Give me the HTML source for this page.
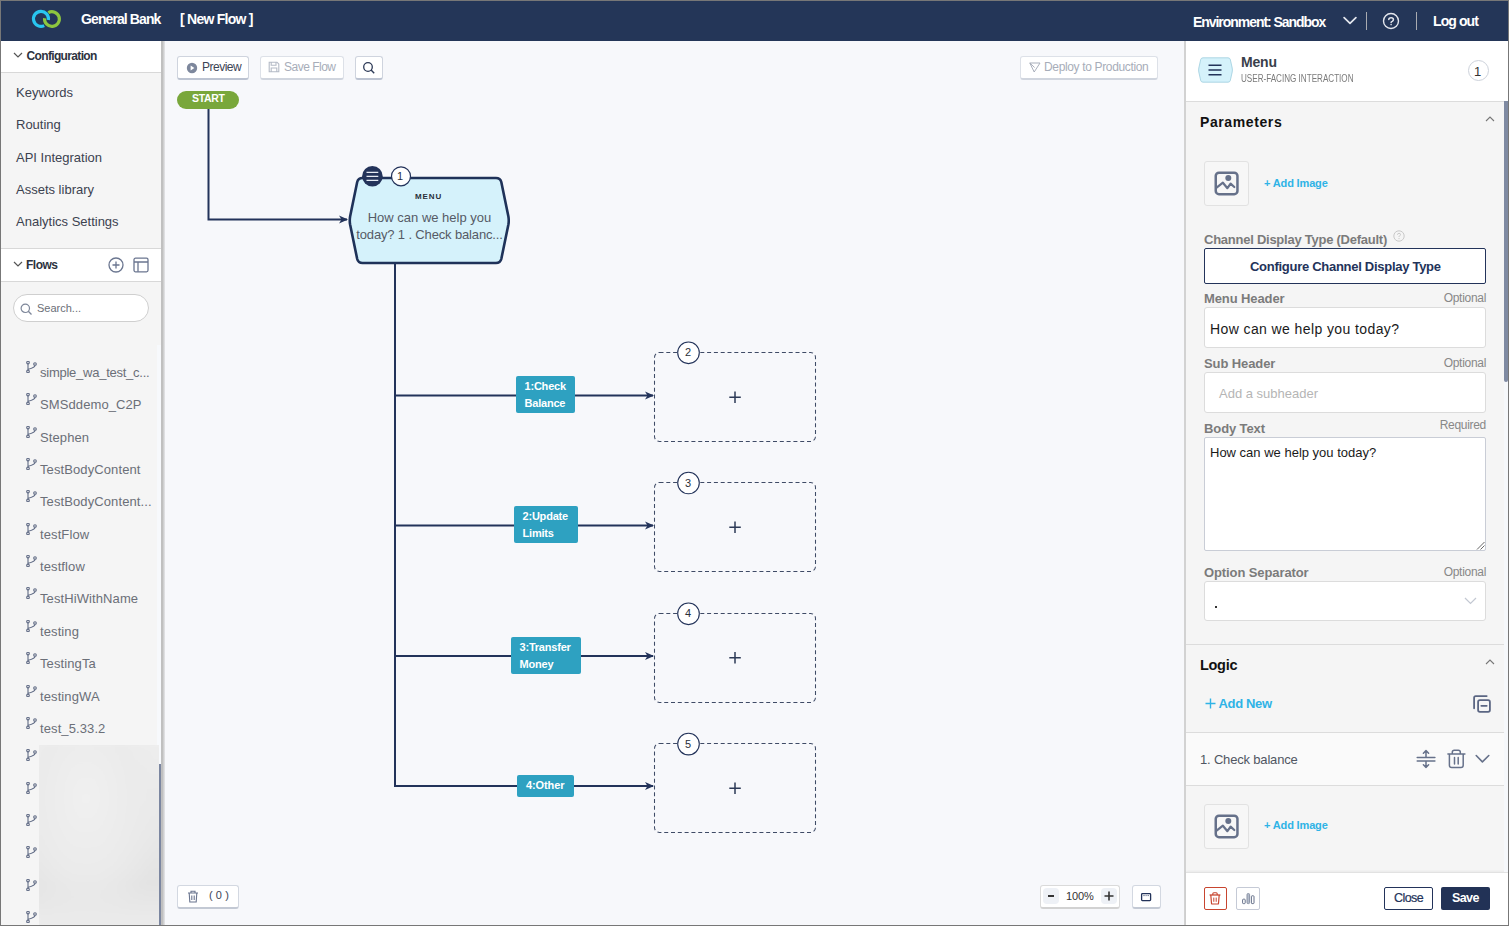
<!DOCTYPE html>
<html><head><meta charset="utf-8">
<style>
*{box-sizing:border-box;margin:0;padding:0}
html,body{width:1509px;height:926px;overflow:hidden;background:#f7f9fc;font-family:"Liberation Sans",sans-serif}
.a{position:absolute}
.t{position:absolute;white-space:nowrap;line-height:1}
#frame{position:absolute;left:0;top:0;width:1509px;height:926px;border:1px solid #777;pointer-events:none;z-index:100}
#hdr{left:0;top:0;width:1509px;height:41px;background:#243658;color:#fff}
#side{left:0;top:41px;width:165px;height:885px;background:#f5f5f5;overflow:hidden}
#canvas{left:165px;top:41px;width:1019px;height:885px;background:#f7f8fb}
#panel{left:1184px;top:41px;width:325px;height:885px;background:#f5f5f5;overflow:hidden}
.btn{position:absolute;background:#fff;border:1px solid #cfd4de;border-bottom:2px solid #bcc3d1;border-radius:3px}
.item{position:absolute;left:16px;font-size:13px;color:#3c4250;white-space:nowrap;line-height:1}
.flow{position:absolute;left:0;width:160px;height:20px}
.flow svg{position:absolute;left:26px;top:0}
.flow span{position:absolute;left:40px;top:5px;font-size:13px;color:#6b6f78;white-space:nowrap;line-height:1;letter-spacing:0.1px}
.lbl{position:absolute;left:20px;font-size:13px;font-weight:bold;color:#7b7b7b;line-height:1;letter-spacing:-0.1px}
.opt{position:absolute;right:23px;font-size:12px;color:#888;line-height:1;letter-spacing:-0.3px}
.inp{position:absolute;left:20px;width:282px;background:#fff;border:1px solid #dcdcdc;border-radius:3px}
</style></head><body>
<div id="frame"></div>

<!-- HEADER -->
<div id="hdr" class="a">
  <svg class="a" style="left:28px;top:6px" width="38" height="26" viewBox="28 6 38 26">
    <path d="M48.4 20.0 A7.5 7.5 0 1 0 44.2 25.6" fill="none" stroke="#29c6f0" stroke-width="3.2"/>
    <path d="M44.6 18.2 A7.4 7.4 0 1 0 48.3 12.6" fill="none" stroke="#8dc63f" stroke-width="3.2"/>
  </svg>
  <div class="t" style="left:81px;top:12.2px;font-size:14px;font-weight:bold;letter-spacing:-0.9px">General Bank</div>
  <div class="t" style="left:180px;top:12.2px;font-size:14px;font-weight:bold;letter-spacing:-0.75px">[ New Flow ]</div>
  <div class="t" style="left:1193px;top:14.5px;font-size:14px;font-weight:bold;letter-spacing:-1.05px">Environment: Sandbox</div>
  <svg class="a" style="left:1343px;top:15px" width="14" height="11" viewBox="0 0 14 11"><path d="M1.1 2.6 L7 8.4 L12.9 2.6" fill="none" stroke="#e4e7ee" stroke-width="1.7" stroke-linecap="round" stroke-linejoin="round"/></svg>
  <div class="a" style="left:1366px;top:12px;width:1px;height:18px;background:#a9abb0"></div>
  <svg class="a" style="left:1382px;top:12px" width="18" height="18" viewBox="0 0 18 18"><circle cx="9" cy="9" r="7.5" fill="none" stroke="#e4e7ee" stroke-width="1.4"/><path d="M6.8 7.6 Q6.8 5.7 9.1 5.7 Q11.4 5.7 11.4 7.6 Q11.4 8.8 10.2 9.4 Q9.1 9.9 9.1 10.5" fill="none" stroke="#e4e7ee" stroke-width="1.5" stroke-linecap="round"/><circle cx="9.1" cy="12.6" r="0.8" fill="#e4e7ee"/></svg>
  <div class="a" style="left:1416px;top:12px;width:1px;height:18px;background:#a9abb0"></div>
  <div class="t" style="left:1433px;top:14.3px;font-size:14px;font-weight:bold;letter-spacing:-0.9px">Log out</div>
</div>

<!-- LEFT SIDEBAR -->
<div id="side" class="a">
  <div class="a" style="left:0;top:0;width:161px;height:32px;background:#fff;border-bottom:1px solid #d8d8d8"></div>
  <svg class="a" style="left:13px;top:11px" width="10" height="7" viewBox="0 0 10 7"><path d="M1 1 L5 5 L9 1" fill="none" stroke="#555" stroke-width="1.2"/></svg>
  <div class="t" style="left:26.5px;top:9.1px;font-size:12px;font-weight:bold;color:#2d3340;letter-spacing:-0.65px">Configuration</div>
  <div class="item" style="top:45.3px">Keywords</div>
  <div class="item" style="top:77.3px">Routing</div>
  <div class="item" style="top:110.3px">API Integration</div>
  <div class="item" style="top:142.3px">Assets library</div>
  <div class="item" style="top:174.3px">Analytics Settings</div>

  <div class="a" style="left:0;top:207px;width:161px;height:34px;background:#fff;border-top:1px solid #d8d8d8;border-bottom:1px solid #d8d8d8"></div>
  <svg class="a" style="left:13px;top:220px" width="10" height="7" viewBox="0 0 10 7"><path d="M1 1 L5 5 L9 1" fill="none" stroke="#555" stroke-width="1.2"/></svg>
  <div class="t" style="left:26px;top:218px;font-size:12px;font-weight:bold;color:#2d3340;letter-spacing:-0.5px">Flows</div>
  <svg class="a" style="left:107px;top:215px" width="18" height="18" viewBox="0 0 18 18"><circle cx="9" cy="9" r="7" fill="none" stroke="#6b7690" stroke-width="1.3"/><path d="M9 5.5 V12.5 M5.5 9 H12.5" stroke="#6b7690" stroke-width="1.3"/></svg>
  <svg class="a" style="left:133px;top:216px" width="16" height="16" viewBox="0 0 16 16"><rect x="1" y="1.2" width="14" height="13.6" rx="1.5" fill="none" stroke="#6b7690" stroke-width="1.3"/><path d="M1 5 H15 M5 5 V14.8" stroke="#6b7690" stroke-width="1.3"/></svg>

  <div class="a" style="left:13px;top:253px;width:136px;height:28px;background:#fff;border:1px solid #cfcfcf;border-radius:14px"></div>
  <svg class="a" style="left:20px;top:262px" width="13" height="13" viewBox="0 0 13 13"><circle cx="5.3" cy="5.3" r="4.2" fill="none" stroke="#7d8699" stroke-width="1.2"/><path d="M8.3 8.3 L11.5 11.5" stroke="#7d8699" stroke-width="1.3"/></svg>
  <div class="t" style="left:37px;top:262px;font-size:11px;color:#6b6f78">Search...</div>

  <div id="flows">
<div class="flow" style="top:320.00px"><svg width="11" height="12" viewBox="0 0 11 12"><circle cx="2" cy="1.6" r="1.3" fill="none" stroke="#5f6a84" stroke-width="1.1"/><circle cx="2" cy="10.4" r="1.3" fill="none" stroke="#5f6a84" stroke-width="1.1"/><circle cx="9" cy="3" r="1.3" fill="none" stroke="#5f6a84" stroke-width="1.1"/><path d="M2 2.9 V9.1 M9 4.3 Q9 6.8 2.3 8.2" fill="none" stroke="#5f6a84" stroke-width="1.1"/></svg><span style="letter-spacing:-0.25px">simple_wa_test_c...</span></div>
<div class="flow" style="top:352.35px"><svg width="11" height="12" viewBox="0 0 11 12"><circle cx="2" cy="1.6" r="1.3" fill="none" stroke="#5f6a84" stroke-width="1.1"/><circle cx="2" cy="10.4" r="1.3" fill="none" stroke="#5f6a84" stroke-width="1.1"/><circle cx="9" cy="3" r="1.3" fill="none" stroke="#5f6a84" stroke-width="1.1"/><path d="M2 2.9 V9.1 M9 4.3 Q9 6.8 2.3 8.2" fill="none" stroke="#5f6a84" stroke-width="1.1"/></svg><span>SMSddemo_C2P</span></div>
<div class="flow" style="top:384.70px"><svg width="11" height="12" viewBox="0 0 11 12"><circle cx="2" cy="1.6" r="1.3" fill="none" stroke="#5f6a84" stroke-width="1.1"/><circle cx="2" cy="10.4" r="1.3" fill="none" stroke="#5f6a84" stroke-width="1.1"/><circle cx="9" cy="3" r="1.3" fill="none" stroke="#5f6a84" stroke-width="1.1"/><path d="M2 2.9 V9.1 M9 4.3 Q9 6.8 2.3 8.2" fill="none" stroke="#5f6a84" stroke-width="1.1"/></svg><span>Stephen</span></div>
<div class="flow" style="top:417.05px"><svg width="11" height="12" viewBox="0 0 11 12"><circle cx="2" cy="1.6" r="1.3" fill="none" stroke="#5f6a84" stroke-width="1.1"/><circle cx="2" cy="10.4" r="1.3" fill="none" stroke="#5f6a84" stroke-width="1.1"/><circle cx="9" cy="3" r="1.3" fill="none" stroke="#5f6a84" stroke-width="1.1"/><path d="M2 2.9 V9.1 M9 4.3 Q9 6.8 2.3 8.2" fill="none" stroke="#5f6a84" stroke-width="1.1"/></svg><span>TestBodyContent</span></div>
<div class="flow" style="top:449.40px"><svg width="11" height="12" viewBox="0 0 11 12"><circle cx="2" cy="1.6" r="1.3" fill="none" stroke="#5f6a84" stroke-width="1.1"/><circle cx="2" cy="10.4" r="1.3" fill="none" stroke="#5f6a84" stroke-width="1.1"/><circle cx="9" cy="3" r="1.3" fill="none" stroke="#5f6a84" stroke-width="1.1"/><path d="M2 2.9 V9.1 M9 4.3 Q9 6.8 2.3 8.2" fill="none" stroke="#5f6a84" stroke-width="1.1"/></svg><span>TestBodyContent...</span></div>
<div class="flow" style="top:481.75px"><svg width="11" height="12" viewBox="0 0 11 12"><circle cx="2" cy="1.6" r="1.3" fill="none" stroke="#5f6a84" stroke-width="1.1"/><circle cx="2" cy="10.4" r="1.3" fill="none" stroke="#5f6a84" stroke-width="1.1"/><circle cx="9" cy="3" r="1.3" fill="none" stroke="#5f6a84" stroke-width="1.1"/><path d="M2 2.9 V9.1 M9 4.3 Q9 6.8 2.3 8.2" fill="none" stroke="#5f6a84" stroke-width="1.1"/></svg><span>testFlow</span></div>
<div class="flow" style="top:514.10px"><svg width="11" height="12" viewBox="0 0 11 12"><circle cx="2" cy="1.6" r="1.3" fill="none" stroke="#5f6a84" stroke-width="1.1"/><circle cx="2" cy="10.4" r="1.3" fill="none" stroke="#5f6a84" stroke-width="1.1"/><circle cx="9" cy="3" r="1.3" fill="none" stroke="#5f6a84" stroke-width="1.1"/><path d="M2 2.9 V9.1 M9 4.3 Q9 6.8 2.3 8.2" fill="none" stroke="#5f6a84" stroke-width="1.1"/></svg><span>testflow</span></div>
<div class="flow" style="top:546.45px"><svg width="11" height="12" viewBox="0 0 11 12"><circle cx="2" cy="1.6" r="1.3" fill="none" stroke="#5f6a84" stroke-width="1.1"/><circle cx="2" cy="10.4" r="1.3" fill="none" stroke="#5f6a84" stroke-width="1.1"/><circle cx="9" cy="3" r="1.3" fill="none" stroke="#5f6a84" stroke-width="1.1"/><path d="M2 2.9 V9.1 M9 4.3 Q9 6.8 2.3 8.2" fill="none" stroke="#5f6a84" stroke-width="1.1"/></svg><span>TestHiWithName</span></div>
<div class="flow" style="top:578.80px"><svg width="11" height="12" viewBox="0 0 11 12"><circle cx="2" cy="1.6" r="1.3" fill="none" stroke="#5f6a84" stroke-width="1.1"/><circle cx="2" cy="10.4" r="1.3" fill="none" stroke="#5f6a84" stroke-width="1.1"/><circle cx="9" cy="3" r="1.3" fill="none" stroke="#5f6a84" stroke-width="1.1"/><path d="M2 2.9 V9.1 M9 4.3 Q9 6.8 2.3 8.2" fill="none" stroke="#5f6a84" stroke-width="1.1"/></svg><span>testing</span></div>
<div class="flow" style="top:611.15px"><svg width="11" height="12" viewBox="0 0 11 12"><circle cx="2" cy="1.6" r="1.3" fill="none" stroke="#5f6a84" stroke-width="1.1"/><circle cx="2" cy="10.4" r="1.3" fill="none" stroke="#5f6a84" stroke-width="1.1"/><circle cx="9" cy="3" r="1.3" fill="none" stroke="#5f6a84" stroke-width="1.1"/><path d="M2 2.9 V9.1 M9 4.3 Q9 6.8 2.3 8.2" fill="none" stroke="#5f6a84" stroke-width="1.1"/></svg><span>TestingTa</span></div>
<div class="flow" style="top:643.50px"><svg width="11" height="12" viewBox="0 0 11 12"><circle cx="2" cy="1.6" r="1.3" fill="none" stroke="#5f6a84" stroke-width="1.1"/><circle cx="2" cy="10.4" r="1.3" fill="none" stroke="#5f6a84" stroke-width="1.1"/><circle cx="9" cy="3" r="1.3" fill="none" stroke="#5f6a84" stroke-width="1.1"/><path d="M2 2.9 V9.1 M9 4.3 Q9 6.8 2.3 8.2" fill="none" stroke="#5f6a84" stroke-width="1.1"/></svg><span>testingWA</span></div>
<div class="flow" style="top:675.85px"><svg width="11" height="12" viewBox="0 0 11 12"><circle cx="2" cy="1.6" r="1.3" fill="none" stroke="#5f6a84" stroke-width="1.1"/><circle cx="2" cy="10.4" r="1.3" fill="none" stroke="#5f6a84" stroke-width="1.1"/><circle cx="9" cy="3" r="1.3" fill="none" stroke="#5f6a84" stroke-width="1.1"/><path d="M2 2.9 V9.1 M9 4.3 Q9 6.8 2.3 8.2" fill="none" stroke="#5f6a84" stroke-width="1.1"/></svg><span>test_5.33.2</span></div>
<div class="flow" style="top:708.20px"><svg width="11" height="12" viewBox="0 0 11 12"><circle cx="2" cy="1.6" r="1.3" fill="none" stroke="#5f6a84" stroke-width="1.1"/><circle cx="2" cy="10.4" r="1.3" fill="none" stroke="#5f6a84" stroke-width="1.1"/><circle cx="9" cy="3" r="1.3" fill="none" stroke="#5f6a84" stroke-width="1.1"/><path d="M2 2.9 V9.1 M9 4.3 Q9 6.8 2.3 8.2" fill="none" stroke="#5f6a84" stroke-width="1.1"/></svg><span></span></div>
<div class="flow" style="top:740.55px"><svg width="11" height="12" viewBox="0 0 11 12"><circle cx="2" cy="1.6" r="1.3" fill="none" stroke="#5f6a84" stroke-width="1.1"/><circle cx="2" cy="10.4" r="1.3" fill="none" stroke="#5f6a84" stroke-width="1.1"/><circle cx="9" cy="3" r="1.3" fill="none" stroke="#5f6a84" stroke-width="1.1"/><path d="M2 2.9 V9.1 M9 4.3 Q9 6.8 2.3 8.2" fill="none" stroke="#5f6a84" stroke-width="1.1"/></svg><span></span></div>
<div class="flow" style="top:772.90px"><svg width="11" height="12" viewBox="0 0 11 12"><circle cx="2" cy="1.6" r="1.3" fill="none" stroke="#5f6a84" stroke-width="1.1"/><circle cx="2" cy="10.4" r="1.3" fill="none" stroke="#5f6a84" stroke-width="1.1"/><circle cx="9" cy="3" r="1.3" fill="none" stroke="#5f6a84" stroke-width="1.1"/><path d="M2 2.9 V9.1 M9 4.3 Q9 6.8 2.3 8.2" fill="none" stroke="#5f6a84" stroke-width="1.1"/></svg><span></span></div>
<div class="flow" style="top:805.25px"><svg width="11" height="12" viewBox="0 0 11 12"><circle cx="2" cy="1.6" r="1.3" fill="none" stroke="#5f6a84" stroke-width="1.1"/><circle cx="2" cy="10.4" r="1.3" fill="none" stroke="#5f6a84" stroke-width="1.1"/><circle cx="9" cy="3" r="1.3" fill="none" stroke="#5f6a84" stroke-width="1.1"/><path d="M2 2.9 V9.1 M9 4.3 Q9 6.8 2.3 8.2" fill="none" stroke="#5f6a84" stroke-width="1.1"/></svg><span></span></div>
<div class="flow" style="top:837.60px"><svg width="11" height="12" viewBox="0 0 11 12"><circle cx="2" cy="1.6" r="1.3" fill="none" stroke="#5f6a84" stroke-width="1.1"/><circle cx="2" cy="10.4" r="1.3" fill="none" stroke="#5f6a84" stroke-width="1.1"/><circle cx="9" cy="3" r="1.3" fill="none" stroke="#5f6a84" stroke-width="1.1"/><path d="M2 2.9 V9.1 M9 4.3 Q9 6.8 2.3 8.2" fill="none" stroke="#5f6a84" stroke-width="1.1"/></svg><span></span></div>
<div class="flow" style="top:869.95px"><svg width="11" height="12" viewBox="0 0 11 12"><circle cx="2" cy="1.6" r="1.3" fill="none" stroke="#5f6a84" stroke-width="1.1"/><circle cx="2" cy="10.4" r="1.3" fill="none" stroke="#5f6a84" stroke-width="1.1"/><circle cx="9" cy="3" r="1.3" fill="none" stroke="#5f6a84" stroke-width="1.1"/><path d="M2 2.9 V9.1 M9 4.3 Q9 6.8 2.3 8.2" fill="none" stroke="#5f6a84" stroke-width="1.1"/></svg><span></span></div>
</div>
  <div class="a" style="left:38.5px;top:704px;width:120.5px;height:181px;overflow:hidden;background:#ececec;z-index:1"><div class="a" style="left:-6px;top:-4px;width:133px;height:190px;background:radial-gradient(ellipse at 40% 30%,#f0f0f0 0%,#ebebeb 40%,transparent 70%),linear-gradient(180deg,#eeeeee 0%,#e8e8e8 45%,#e3e3e3 75%,#ededed 100%);filter:blur(3px)"></div></div>
  <div class="a" style="left:157px;top:304px;width:4px;height:581px;background:#f7f9fc"></div>
  <div class="a" style="left:161px;top:0;width:2px;height:885px;background:#c0c0c0"></div><div class="a" style="left:163px;top:0;width:2px;height:885px;background:linear-gradient(90deg,#c8c8c8,#e6e7ea)"></div>
  <div class="a" style="left:159px;top:723px;width:2px;height:162px;background:#7b86a0;z-index:2"></div>
</div>

<!-- CANVAS -->
<div id="canvas" class="a"></div>

<svg class="a" style="left:0;top:0" width="1509" height="926" viewBox="0 0 1509 926">
  <defs>
    <marker id="arr" markerWidth="10" markerHeight="10" refX="8" refY="5" orient="auto" markerUnits="userSpaceOnUse">
      <path d="M0 1 L9 5 L0 9 L2.5 5 Z" fill="#23335a"/>
    </marker>
  </defs>
  <g stroke="#23335a" stroke-width="2" fill="none">
    <path d="M208.5 108 V219.5 H347" marker-end="url(#arr)"/>
    <path d="M395 264 V787"/>
    <path d="M395 395.5 H653" marker-end="url(#arr)"/>
    <path d="M395 525.5 H653" marker-end="url(#arr)"/>
    <path d="M395 656 H653" marker-end="url(#arr)"/>
    <path d="M394.5 786 H653" marker-end="url(#arr)"/>
  </g>
  <!-- menu node -->
  <path d="M362.5 178 H496 Q500.3 178 501.3 182 L508.4 216.5 Q509.1 220.5 508.4 224.5 L501.3 259 Q500.3 263 496 263 H362.5 Q358.2 263 357.2 259 L350.1 224.5 Q349.4 220.5 350.1 216.5 L357.2 182 Q358.2 178 362.5 178 Z" fill="#d5f2fb" stroke="#1f3259" stroke-width="2.6"/>
  <circle cx="372.4" cy="176.3" r="10.3" fill="#23335a"/>
  <path d="M366.5 172.3 H378.3 M366.5 176.3 H378.3 M366.5 180.3 H378.3" stroke="#e6ebf3" stroke-width="1.3"/>
  <circle cx="401" cy="176.3" r="9.5" fill="#fff" stroke="#23335a" stroke-width="1.2"/>
  <!-- dashed boxes -->
  <g fill="none" stroke="#3f4b66" stroke-width="1.05" stroke-dasharray="4 2.8">
    <rect x="654.5" y="352.5" width="161" height="89" rx="5"/>
    <rect x="654.5" y="482.5" width="161" height="89" rx="5"/>
    <rect x="654.5" y="613.5" width="161" height="89" rx="5"/>
    <rect x="654.5" y="743.5" width="161" height="89" rx="5"/>
  </g>
  <g fill="#fff" stroke="#23335a" stroke-width="1.1">
    <circle cx="688.5" cy="352.8" r="10.8"/>
    <circle cx="688.5" cy="483" r="10.8"/>
    <circle cx="688.5" cy="613.8" r="10.8"/>
    <circle cx="688.5" cy="744.1" r="10.8"/>
  </g>
  <g stroke="#2d3a57" stroke-width="1.5">
    <path d="M735 391.5 V403 M729.3 397.2 H740.8"/>
    <path d="M735 521.5 V533 M729.3 527.2 H740.8"/>
    <path d="M735 652 V663.5 M729.3 657.7 H740.8"/>
    <path d="M735 782.5 V794 M729.3 788.2 H740.8"/>
  </g>
</svg>

<!-- canvas html overlays -->
<div class="btn" style="left:177px;top:56px;width:72px;height:24px"></div>
<svg class="a" style="left:186px;top:62px" width="12" height="12" viewBox="0 0 12 12"><circle cx="6" cy="6" r="5.2" fill="#7d879c"/><path d="M4.6 3.6 L8.4 6 L4.6 8.4 Z" fill="#fff"/></svg>
<div class="t" style="left:202px;top:61px;font-size:12px;color:#3c4455;letter-spacing:-0.5px">Preview</div>
<div class="btn" style="left:260px;top:56px;width:84px;height:24px;border-color:#dde1e8;border-bottom-color:#d0d5de"></div>
<svg class="a" style="left:268px;top:61px" width="12" height="12" viewBox="0 0 12 12"><path d="M1.2 1.2 H9 L10.8 3 V10.8 H1.2 Z M3.2 1.2 V4.2 H8 V1.2 M3.2 10.8 V7 H8.8 V10.8" fill="none" stroke="#b4bac6" stroke-width="1.1"/></svg>
<div class="t" style="left:284px;top:61px;font-size:12px;color:#a7adb9;letter-spacing:-0.5px">Save Flow</div>
<div class="btn" style="left:355px;top:56px;width:28px;height:24px"></div>
<svg class="a" style="left:362px;top:61px" width="14" height="14" viewBox="0 0 14 14"><circle cx="6" cy="6" r="4.3" fill="none" stroke="#2d3a57" stroke-width="1.3"/><path d="M9.1 9.1 L12.2 12.2" stroke="#2d3a57" stroke-width="1.4"/></svg>

<div class="btn" style="left:1020px;top:56px;width:138px;height:24px;border-color:#dde1e8;border-bottom-color:#d0d5de"></div>
<svg class="a" style="left:1029px;top:62px" width="12" height="11" viewBox="0 0 12 11"><path d="M0.8 1 L11 1 L5.2 10 Z M0.8 1 L5.6 5.5" fill="none" stroke="#a9afbb" stroke-width="1"/></svg>
<div class="t" style="left:1044px;top:61px;font-size:12px;color:#a7adb9;letter-spacing:-0.35px">Deploy to Production</div>

<div class="a" style="left:177px;top:91px;width:62px;height:18px;border-radius:9px;background:#79a73b"></div>
<div class="t" style="left:192px;top:93px;font-size:10.5px;font-weight:bold;color:#fff;letter-spacing:-0.35px">START</div>

<div class="t" style="left:415px;top:192.5px;font-size:8px;font-weight:bold;color:#2a2f3a;letter-spacing:0.9px">MENU</div>
<div class="t" style="left:397px;top:171px;font-size:11px;color:#2a2f3a">1</div>
<div class="a" style="left:329.5px;top:208.5px;width:200px;text-align:center;font-size:13px;color:#555b66;line-height:17.5px;white-space:nowrap">How can we help you<br><span style="letter-spacing:-0.15px">today? 1 . Check balanc...</span></div>

<div class="a" style="left:516px;top:376px;width:59px;height:37px;background:#2ea1c1;border-radius:2px"></div>
<div class="a" style="left:524.5px;top:377.5px;font-size:11px;font-weight:bold;color:#fff;line-height:17px;letter-spacing:-0.2px">1:Check<br>Balance</div>
<div class="a" style="left:514px;top:506px;width:64px;height:37px;background:#2ea1c1;border-radius:2px"></div>
<div class="a" style="left:522.5px;top:507.5px;font-size:11px;font-weight:bold;color:#fff;line-height:17px;letter-spacing:-0.2px">2:Update<br>Limits</div>
<div class="a" style="left:511px;top:637px;width:70px;height:37px;background:#2ea1c1;border-radius:2px"></div>
<div class="a" style="left:519.5px;top:638.5px;font-size:11px;font-weight:bold;color:#fff;line-height:17px;letter-spacing:-0.2px">3:Transfer<br>Money</div>
<div class="a" style="left:517px;top:775px;width:57px;height:22px;background:#2ea1c1;border-radius:2px"></div>
<div class="a" style="left:526px;top:779px;font-size:11px;font-weight:bold;color:#fff;line-height:12px;letter-spacing:-0.1px">4:Other</div>

<div class="t" style="left:685px;top:347px;font-size:11px;color:#2a2f3a">2</div>
<div class="t" style="left:685px;top:477.5px;font-size:11px;color:#2a2f3a">3</div>
<div class="t" style="left:685px;top:608px;font-size:11px;color:#2a2f3a">4</div>
<div class="t" style="left:685px;top:738.5px;font-size:11px;color:#2a2f3a">5</div>

<!-- bottom controls -->
<div class="btn" style="left:177px;top:885px;width:62px;height:24px;border-color:#d3d8e1;border-bottom-color:#c3c9d4"></div>
<svg class="a" style="left:187px;top:890px" width="12" height="13" viewBox="0 0 12 13"><path d="M1 3 H11 M4 3 V1.2 H8 V3 M2.2 3 L2.8 12 H9.2 L9.8 3 M4.8 5.5 V10 M7.2 5.5 V10" fill="none" stroke="#6b7690" stroke-width="1.1"/></svg>
<div class="t" style="left:209px;top:890px;font-size:11px;color:#3c4455;letter-spacing:3.2px">(0)</div>

<div class="a" style="left:1040px;top:885px;width:80px;height:24px;background:#fff;border:1px solid #dadada;border-bottom:2px solid #d2d2d2;border-radius:3px"></div>
<div class="a" style="left:1043px;top:888px;width:16px;height:16px;background:#eef1f6;border-radius:4px"></div>
<div class="a" style="left:1101px;top:888px;width:16px;height:16px;background:#eef1f6;border-radius:4px"></div>
<div class="a" style="left:1048px;top:895px;width:6px;height:2px;background:#333"></div>
<svg class="a" style="left:1104px;top:891px" width="10" height="10" viewBox="0 0 10 10"><path d="M5 0.5 V9.5 M0.5 5 H9.5" stroke="#333" stroke-width="1.6"/></svg>
<div class="t" style="left:1066px;top:891px;font-size:11px;color:#333;letter-spacing:-0.1px">100%</div>
<div class="btn" style="left:1132px;top:885px;width:29px;height:24px;border-color:#d3d8e1;border-bottom-color:#c3c9d4"></div>
<svg class="a" style="left:1140px;top:892px" width="12" height="10" viewBox="0 0 12 10"><rect x="1.6" y="1.6" width="9" height="7" rx="0.8" fill="none" stroke="#23335a" stroke-width="1.3"/><path d="M3.4 3.6 H4.6 M5.6 3.6 H6.6 M7.6 3.6 H8.8" stroke="#23335a" stroke-width="0.8"/></svg>

<!-- RIGHT PANEL -->
<div id="panel" class="a">
  <div class="a" style="left:0;top:0;width:2px;height:885px;background:#d2d2d2"></div>
  <div class="a" style="left:2px;top:0;width:323px;height:61px;background:#fff;border-bottom:1px solid #dcdcdc"></div>
  <svg class="a" style="left:14px;top:16px" width="35" height="26" viewBox="0 0 35 26"><path d="M5 0.8 H30 Q31.8 0.8 32.3 2.5 L34.2 11 Q34.6 13 34.2 15 L32.3 23.5 Q31.8 25.2 30 25.2 H5 Q3.2 25.2 2.7 23.5 L0.8 15 Q0.4 13 0.8 11 L2.7 2.5 Q3.2 0.8 5 0.8 Z" fill="#d5f2fb" stroke="#9ccddd" stroke-width="0.8"/><path d="M10.5 8.3 H23.5 M10.5 13 H23.5 M10.5 17.7 H23.5" stroke="#23335a" stroke-width="1.5"/></svg>
  <div class="t" style="left:57px;top:14px;font-size:14px;font-weight:bold;color:#3a3f4b;letter-spacing:-0.2px">Menu</div>
  <div class="t" style="left:57px;top:32.5px;font-size:10px;color:#7a7a7a;transform:scaleX(0.81);transform-origin:0 0">USER-FACING INTERACTION</div>
  <div class="a" style="left:284px;top:19px;width:21px;height:21px;border:1px solid #cdd2db;border-radius:50%;background:#fff"></div>
  <div class="t" style="left:290px;top:24px;font-size:13px;color:#333">1</div>

  <div class="t" style="left:16px;top:74px;font-size:14px;font-weight:bold;color:#111;letter-spacing:0.6px">Parameters</div>
  <svg class="a" style="left:301px;top:74px" width="10" height="7" viewBox="0 0 10 7"><path d="M1 6 L5 2 L9 6" fill="none" stroke="#777" stroke-width="1.1"/></svg>

  <div class="a" style="left:20px;top:120px;width:45px;height:45px;background:#f7f7f7;border:1px solid #e2e2e2;border-radius:3px"></div>
  <svg class="a" style="left:30px;top:130px" width="25" height="25" viewBox="0 0 25 25"><rect x="1.75" y="1.65" width="21.7" height="21.5" rx="3.2" fill="none" stroke="#66718a" stroke-width="2.5"/><circle cx="14.3" cy="7" r="3" fill="#66718a"/><path d="M2.6 16.6 L8.9 11.7 L13.4 17.2 L16.6 12.6 L20.3 16" fill="none" stroke="#66718a" stroke-width="2.2" stroke-linecap="round" stroke-linejoin="round"/></svg>
  <div class="t" style="left:80px;top:137px;font-size:11px;font-weight:bold;color:#2fb3e6;letter-spacing:-0.15px">+ Add Image</div>

  <div class="lbl" style="top:191.7px;letter-spacing:-0.25px">Channel Display Type (Default)</div>
  <svg class="a" style="left:209px;top:189px" width="12" height="12" viewBox="0 0 12 12"><circle cx="6" cy="6" r="5.2" fill="none" stroke="#c4c4c4" stroke-width="0.9"/><path d="M4.5 4.8 Q4.5 3.3 6 3.3 Q7.5 3.3 7.5 4.6 Q7.5 5.5 6.5 5.9 Q6 6.2 6 7" fill="none" stroke="#c4c4c4" stroke-width="0.9"/><circle cx="6" cy="8.6" r="0.55" fill="#c4c4c4"/></svg>
  <div class="a" style="left:20px;top:207px;width:282px;height:36px;background:#fff;border:1.5px solid #23335a;border-radius:2px"></div>
  <div class="t" style="left:66px;top:218.5px;font-size:13px;font-weight:bold;color:#23335a;letter-spacing:-0.28px">Configure Channel Display Type</div>

  <div class="lbl" style="top:251px">Menu Header</div>
  <div class="opt" style="top:250.8px">Optional</div>
  <div class="inp" style="top:266px;height:41px"></div>
  <div class="t" style="left:26px;top:281px;font-size:14px;color:#1a1a1a;letter-spacing:0.4px">How can we help you today?</div>

  <div class="lbl" style="top:316px">Sub Header</div>
  <div class="opt" style="top:316px">Optional</div>
  <div class="inp" style="top:331px;height:41px"></div>
  <div class="t" style="left:35px;top:346.2px;font-size:13px;color:#b5b5b5">Add a subheader</div>

  <div class="lbl" style="top:380.5px">Body Text</div>
  <div class="opt" style="top:377.8px">Required</div>
  <div class="inp" style="top:396px;height:114px;border-color:#c9cdd6;border-radius:2px"></div>
  <div class="t" style="left:26px;top:404.8px;font-size:13px;color:#1a1a1a">How can we help you today?</div>
  <svg class="a" style="left:292px;top:500px" width="9" height="9" viewBox="0 0 9 9"><path d="M8.5 1 L1 8.5 M8.5 4.5 L4.5 8.5" stroke="#555" stroke-width="0.9"/></svg>

  <div class="lbl" style="top:524.7px">Option Separator</div>
  <div class="opt" style="top:524.8px">Optional</div>
  <div class="inp" style="top:540px;height:40px"></div>
  <div class="a" style="left:31px;top:565px;width:2px;height:2px;background:#333"></div>
  <svg class="a" style="left:280px;top:556px" width="13" height="8" viewBox="0 0 13 8"><path d="M1 1 L6.5 6.5 L12 1" fill="none" stroke="#c3c8d2" stroke-width="1.2"/></svg>

  <div class="a" style="left:2px;top:603px;width:318px;height:1px;background:#dcdcdc"></div>
  <div class="t" style="left:16px;top:616.7px;font-size:14.5px;font-weight:bold;color:#111;letter-spacing:-0.3px">Logic</div>
  <svg class="a" style="left:301px;top:617px" width="10" height="7" viewBox="0 0 10 7"><path d="M1 6 L5 2 L9 6" fill="none" stroke="#777" stroke-width="1.1"/></svg>
  <svg class="a" style="left:20.5px;top:656.5px" width="11" height="11" viewBox="0 0 11 11"><path d="M5.5 0.5 V10.5 M0.5 5.5 H10.5" stroke="#2fb3e6" stroke-width="1.4"/></svg>
  <div class="t" style="left:34.5px;top:655.8px;font-size:13px;font-weight:bold;color:#2fb3e6;letter-spacing:-0.35px">Add New</div>
  <svg class="a" style="left:288px;top:653px" width="20" height="20" viewBox="0 0 20 20"><path d="M2.1 14.3 V3.7 Q2.1 2.1 3.7 2.1 H14.7" fill="none" stroke="#5b6683" stroke-width="1.8" stroke-linecap="round"/><rect x="6.1" y="6.1" width="11.8" height="11.8" rx="1.8" fill="none" stroke="#5b6683" stroke-width="1.8"/><path d="M9.3 11.8 H14.7" stroke="#5b6683" stroke-width="1.8" stroke-linecap="round"/></svg>

  <div class="a" style="left:2px;top:691px;width:318px;height:54px;background:#fafafa;border-top:1px solid #dcdcdc;border-bottom:1px solid #dcdcdc"></div>
  <div class="t" style="left:16px;top:712px;font-size:13px;color:#505662;letter-spacing:-0.18px">1. Check balance</div>
  <svg class="a" style="left:232px;top:708px" width="20" height="20" viewBox="0 0 20 20"><path d="M1.2 8.4 H18.9 M1.2 11.9 H18.9 M10 1.6 V8.4 M10 11.9 V18.4 M7.4 4.2 L10 1.6 L12.6 4.2 M7.4 15.8 L10 18.4 L12.6 15.8" fill="none" stroke="#66718a" stroke-width="1.5" stroke-linecap="round" stroke-linejoin="round"/></svg>
  <svg class="a" style="left:263px;top:708px" width="19" height="20" viewBox="0 0 19 20"><path d="M0.9 4.9 H17.9 M5.3 4.9 V3.3 Q5.3 1.3 7.3 1.3 H11.3 Q13.3 1.3 13.3 3.3 V4.9 M2.4 4.9 V16.3 Q2.4 18.6 4.7 18.6 H13.9 Q16.2 18.6 16.2 16.3 V4.9 M7.5 8.6 V15 M11.2 8.6 V15" fill="none" stroke="#66718a" stroke-width="1.5" stroke-linecap="round"/></svg>
  <svg class="a" style="left:291px;top:713px" width="15" height="10" viewBox="0 0 15 10"><path d="M1.2 1.5 L7.4 7.9 L13.8 1.5" fill="none" stroke="#66718a" stroke-width="1.6" stroke-linecap="round" stroke-linejoin="round"/></svg>

  <div class="a" style="left:20px;top:763px;width:45px;height:45px;background:#f7f7f7;border:1px solid #e2e2e2;border-radius:3px"></div>
  <svg class="a" style="left:30px;top:773px" width="25" height="25" viewBox="0 0 25 25"><rect x="1.75" y="1.65" width="21.7" height="21.5" rx="3.2" fill="none" stroke="#66718a" stroke-width="2.5"/><circle cx="14.3" cy="7" r="3" fill="#66718a"/><path d="M2.6 16.6 L8.9 11.7 L13.4 17.2 L16.6 12.6 L20.3 16" fill="none" stroke="#66718a" stroke-width="2.2" stroke-linecap="round" stroke-linejoin="round"/></svg>
  <div class="t" style="left:80px;top:779px;font-size:11px;font-weight:bold;color:#2fb3e6;letter-spacing:-0.15px">+ Add Image</div>

  <div class="a" style="left:2px;top:831px;width:323px;height:54px;background:#fff;border-top:1px solid #e2e2e2;box-shadow:0 -1px 2px rgba(0,0,0,0.05)"></div>
  <div class="a" style="left:20px;top:846px;width:23px;height:23px;border:1px solid #c8452f;border-radius:2px;background:#fff"></div>
  <svg class="a" style="left:25px;top:851px" width="12" height="13" viewBox="0 0 12 13"><path d="M0.6 3 H11.4" stroke="#c8452f" stroke-width="1.3"/><path d="M3.8 3 V1.8 Q3.8 0.8 4.8 0.8 H7.2 Q8.2 0.8 8.2 1.8 V3" fill="none" stroke="#c8452f" stroke-width="1.1"/><path d="M1.8 3 L2.5 11.3 Q2.6 12 3.3 12 H8.7 Q9.4 12 9.5 11.3 L10.2 3" fill="none" stroke="#c8452f" stroke-width="1.2"/><path d="M4.8 5.6 V9.8 M7.2 5.6 V9.8" stroke="#c8452f" stroke-width="1"/></svg>
  <div class="a" style="left:52px;top:846px;width:24px;height:23px;border:1px solid #c5cad6;border-radius:2px;background:#fff"></div>
  <svg class="a" style="left:57px;top:851px" width="15" height="13" viewBox="0 0 15 13"><rect x="1.6" y="7.2" width="2.6" height="4.4" rx="0.7" fill="none" stroke="#66718a" stroke-width="1"/><rect x="6" y="1.6" width="2.6" height="10" rx="1" fill="#b4bccb" stroke="#8a93a6" stroke-width="1"/><rect x="10.4" y="3.8" width="2.6" height="7.8" rx="0.7" fill="none" stroke="#66718a" stroke-width="1"/></svg>
  <div class="a" style="left:200px;top:846px;width:49px;height:23px;border:1.5px solid #23335a;border-radius:2px;background:#fff"></div>
  <div class="t" style="left:210px;top:851px;font-size:12.5px;color:#23335a;letter-spacing:-0.55px;-webkit-text-stroke:0.2px #23335a">Close</div>
  <div class="a" style="left:257px;top:846px;width:49px;height:23px;border-radius:2px;background:#223256"></div>
  <div class="t" style="left:268px;top:851px;font-size:12.5px;font-weight:bold;color:#fff;letter-spacing:-0.6px">Save</div>

  <div class="a" style="left:320px;top:60px;width:5px;height:771px;background:#f6f8fb"></div>
  <div class="a" style="left:320px;top:60px;width:4px;height:281px;background:#7f8aa2;border-radius:0 0 2px 2px"></div>
</div>


</body></html>
